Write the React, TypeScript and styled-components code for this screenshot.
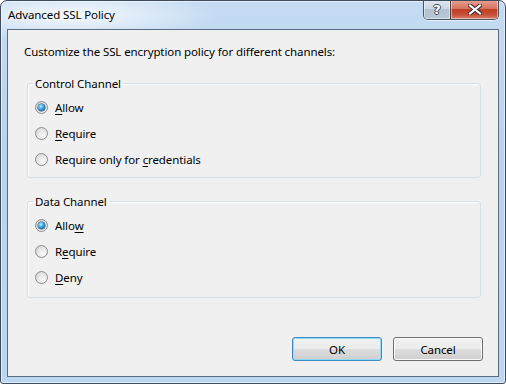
import React from "react";
import styled, { createGlobalStyle } from "styled-components";

const Global = createGlobalStyle`
  html, body { margin: 0; padding: 0; background: #ffffff; }
  body {
    font-family: "Noto Sans", "Segoe UI", sans-serif;
    font-size: 11.5px;
    letter-spacing: -0.1px;
    color: #000;
  }
  * { box-sizing: border-box; }
`;

const Window = styled.div`
  width: 506px;
  height: 384px;
  border: 1px solid #3c4c5e;
  border-radius: 7px 7px 3px 3px;
  background:
    radial-gradient(ellipse 150px 26px at 70px 14px, rgba(255,255,255,0.85), rgba(255,255,255,0) 100%),
    linear-gradient(to bottom, #c4dbf3 0%, #b9d2ee 40%, #bdd6f1 100%);
  box-shadow: inset 0 0 0 1px rgba(255,255,255,0.55);
  padding: 0 6px 6px 6px;
  display: flex;
  flex-direction: column;
  overflow: hidden;
`;

const TitleBar = styled.div`
  height: 28px;
  display: flex;
  justify-content: space-between;
  align-items: flex-start;
`;

const Title = styled.div`
  margin: 6px 0 0 1px;
  line-height: 15px;
  font-size: 11.5px;
  color: #000;
  text-shadow: 0 0 6px rgba(255,255,255,0.9);
`;

const CaptionGroup = styled.div`
  display: flex;
  margin-top: -1px;
  height: 20px;
  border: 1px solid #4a5563;
  border-top: none;
  border-radius: 0 0 5px 5px;
  overflow: hidden;
  box-shadow: 0 1px 0 rgba(255,255,255,0.6);
`;

const CaptionButton = styled.div<{ $close?: boolean }>`
  width: ${(p) => (p.$close ? "48px" : "26px")};
  height: 100%;
  display: flex;
  align-items: center;
  justify-content: center;
  border-left: ${(p) => (p.$close ? "1px solid #5a3a3a" : "none")};
  background: ${(p) =>
    p.$close
      ? "linear-gradient(to bottom, #e8a393 0%, #d6735f 45%, #c13f27 50%, #c74b33 75%, #d8816a 100%)"
      : "linear-gradient(to bottom, #dfe7f0 0%, #cdd8e4 45%, #b2c0cf 50%, #bac9d9 100%)"};
  box-shadow: inset 0 0 0 1px rgba(255,255,255,0.45);
`;

const HelpGlyph = styled.span`
  font-family: "DejaVu Sans", sans-serif;
  font-weight: bold;
  font-size: 13px;
  line-height: 13px;
  letter-spacing: 0;
  color: #ffffff;
  text-shadow:
    1px 0 0 #3b4656, -1px 0 0 #3b4656, 0 1px 0 #3b4656, 0 -1px 0 #3b4656;
`;

const Client = styled.div`
  flex: 1;
  border: 1px solid #5a6c80;
  background: #f0f0f0;
  display: flex;
  flex-direction: column;
  padding: 14px 15px 15px 16px;
`;

const Intro = styled.div`
  line-height: 15px;
  margin-bottom: 17px;
`;

const Group = styled.fieldset<{ $bottom: number }>`
  margin: 0 2px 16px 3px;
  padding: 3px 0 ${(p) => p.$bottom}px 7px;
  border: 1px solid #d5dfe5;
  border-radius: 3px;
  box-shadow: inset 1px 1px 0 #ffffff;
  min-width: 0;
`;

const Legend = styled.legend`
  margin-left: -2px;
  padding: 0 2px 0 2px;
  line-height: 15px;
  font-size: 11.5px;
  color: #000;
`;

const Option = styled.label`
  height: 26px;
  display: flex;
  align-items: center;
  gap: 7px;
  line-height: 15px;
  cursor: default;
`;

const Radio = styled.span<{ $checked?: boolean }>`
  width: 13px;
  height: 13px;
  border-radius: 50%;
  border: 1px solid #8a8c8e;
  background: radial-gradient(circle at 65% 70%, #f9f9f9 0%, #e9e9e9 45%, #cfcfcf 100%);
  display: flex;
  align-items: center;
  justify-content: center;
  flex: none;

  &::after {
    content: "";
    display: ${(p) => (p.$checked ? "block" : "none")};
    width: 7px;
    height: 7px;
    border-radius: 50%;
    background: radial-gradient(circle at 40% 35%, #b9ecff 0%, #4fb6e8 35%, #1a6aa5 70%, #0d3f6e 100%);
    box-shadow: 0 0 0 0.5px #174a78;
  }
`;

const Key = styled.span`
  text-decoration: underline;
  text-underline-offset: 2px;
`;

const Buttons = styled.div`
  margin-top: auto;
  display: flex;
  justify-content: flex-end;
  gap: 11px;
`;

const Button = styled.button<{ $default?: boolean }>`
  width: 90px;
  height: 24px;
  font-family: "Noto Sans", "Segoe UI", sans-serif;
  font-size: 11.5px;
  letter-spacing: -0.1px;
  color: #000;
  padding: 0;
  border-radius: 3px;
  border: 1px solid ${(p) => (p.$default ? "#3c8ac4" : "#707070")};
  background: linear-gradient(to bottom, #f2f2f2 0%, #ebebeb 48%, #dddddd 52%, #cfcfcf 100%);
  box-shadow: inset 0 0 0 1px ${(p) => (p.$default ? "#8fdcf9" : "#fbfbfb")};
`;

type Opt = { pre?: string; key: string; post?: string; checked?: boolean };

const groups: { title: string; bottom: number; options: Opt[] }[] = [
  {
    title: "Control Channel",
    bottom: 5,
    options: [
      { key: "A", post: "llow", checked: true },
      { key: "R", post: "equire" },
      { pre: "Require only for ", key: "c", post: "redentials" },
    ],
  },
  {
    title: "Data Channel",
    bottom: 7,
    options: [
      { pre: "Allo", key: "w", checked: true },
      { pre: "R", key: "e", post: "quire" },
      { key: "D", post: "eny" },
    ],
  },
];

export default function App() {
  return (
    <>
      <Global />
      <Window>
        <TitleBar>
          <Title>Advanced SSL Policy</Title>
          <CaptionGroup>
            <CaptionButton>
              <HelpGlyph>?</HelpGlyph>
            </CaptionButton>
            <CaptionButton $close>
              <svg width="14" height="11" viewBox="0 0 14 11">
                <path
                  d="M2 1.5 L12 9.5 M12 1.5 L2 9.5"
                  stroke="#3a2a2a"
                  strokeWidth="4.2"
                  strokeLinecap="square"
                />
                <path
                  d="M2 1.5 L12 9.5 M12 1.5 L2 9.5"
                  stroke="#ffffff"
                  strokeWidth="2.2"
                  strokeLinecap="square"
                />
              </svg>
            </CaptionButton>
          </CaptionGroup>
        </TitleBar>
        <Client>
          <Intro>Customize the SSL encryption policy for different channels:</Intro>
          {groups.map((g) => (
            <Group key={g.title} $bottom={g.bottom}>
              <Legend>{g.title}</Legend>
              {g.options.map((o, i) => (
                <Option key={i}>
                  <Radio $checked={o.checked} />
                  <span>
                    {o.pre}
                    <Key>{o.key}</Key>
                    {o.post}
                  </span>
                </Option>
              ))}
            </Group>
          ))}
          <Buttons>
            <Button $default>OK</Button>
            <Button>Cancel</Button>
          </Buttons>
        </Client>
      </Window>
    </>
  );
}
